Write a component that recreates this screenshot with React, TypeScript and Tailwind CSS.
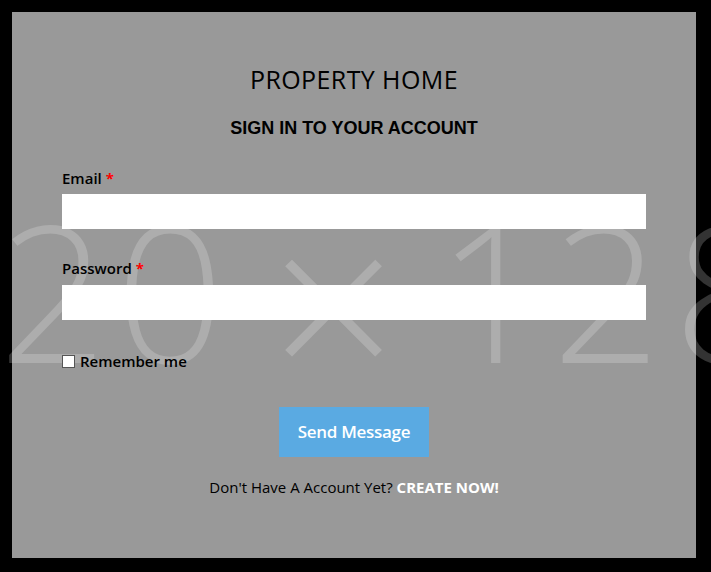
import React from "react";

export default function App() {
  const os = { fontFamily: '"Open Sans", "Noto Sans", sans-serif' };
  return (
    <div className="relative w-[711px] h-[572px] bg-black overflow-hidden pt-[12px] pl-[12px]">
      <div className="w-[684px] h-[546px] bg-[#999999] flex flex-col items-center" style={os}>
        <div className="relative z-10 w-full flex flex-col items-center">
          <h1 className="mt-[55px] text-[25px] tracking-[0.4px] leading-none text-black font-normal">PROPERTY HOME</h1>
          <h2
            className="mt-[27px] text-[18px] leading-none font-bold text-black"
            style={{ fontFamily: '"Liberation Sans", Arial, sans-serif' }}
          >
            SIGN IN TO YOUR ACCOUNT
          </h2>
          <form className="w-full px-[50px] mt-[34px] flex flex-col">
            <label className="text-[15px] leading-none font-semibold text-black">
              Email <span className="text-[#ff0000] font-bold">*</span>
            </label>
            <input type="email" className="mt-[8px] h-[35px] w-full bg-white outline-none" />
            <label className="mt-[32px] text-[15px] leading-none font-semibold text-black">
              Password <span className="text-[#ff0000] font-bold">*</span>
            </label>
            <input type="password" className="mt-[9px] h-[35px] w-full bg-white outline-none" />
            <div className="mt-[34px] flex items-center gap-[5px]">
              <span className="w-[13px] h-[13px] bg-white border border-[#555] block" />
              <span className="text-[15px] leading-none font-semibold text-black">Remember me</span>
            </div>
            <div className="mt-[38px] flex justify-center">
              <button
                type="button"
                className="w-[150px] h-[50px] bg-[#5aaae2] text-white text-[17px] tracking-[-0.3px] font-semibold flex items-center justify-center"
              >
                Send Message
              </button>
            </div>
            <p className="mt-[23px] text-center text-[15px] leading-none text-black">
              Don't Have A Account Yet? <span className="font-bold text-white">CREATE NOW!</span>
            </p>
          </form>
        </div>
      </div>
      <div
        className="pointer-events-none absolute left-[-5px] top-[195px] flex items-start text-[190px] leading-none whitespace-nowrap text-white/20 font-light z-0"
        style={os}
      >
        <span className="w-[116px] text-center">2</span>
        <span className="w-[118px] text-center">0</span>
        <span className="w-[41px]" />
        <span className="w-[100px] text-center text-[223px] mt-[-6px]">×</span>
        <span className="w-[67px]" />
        <span className="w-[102px] text-center">1</span>
        <span className="w-[135px] text-center">2</span>
        <span className="w-[84px] text-center">8</span>
      </div>
    </div>
  );
}
